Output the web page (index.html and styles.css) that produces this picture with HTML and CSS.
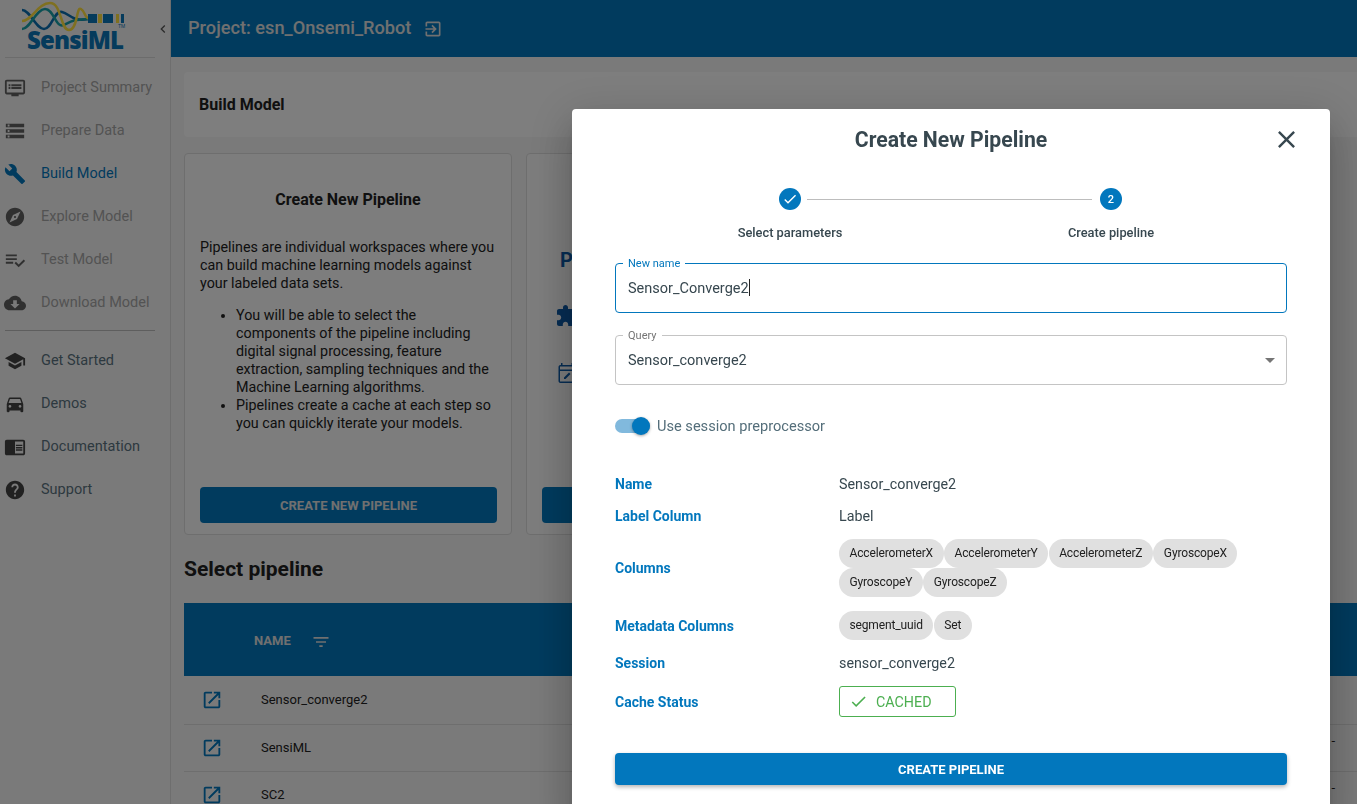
FILE: index.html
```html
<!DOCTYPE html>
<html lang="en">

<head>
    <meta charset="UTF-8">
    <meta name="viewport" content="width=device-width, initial-scale=1.0">
    <title>SensiML - Build Model</title>
    <link rel="stylesheet" href="styles.css">
</head>

<body>
    <div class="app">
        <aside class="sidebar">
            <div class="logo">
                <svg width="150" height="56" viewBox="0 0 150 56">
                    <path class="wave-blue" d="M22 10C30 10 36 29 44 29S54 10 62 12S72 22 88 19" />
                    <path class="wave-teal" d="M22 29C30 29 36 9 45 9S56 29 64 25S72 20 88 19" />
                    <path class="wave-gold" d="M22 21C32 21 38 3 50 3S60 30 69 30S76 6 81 9S84 18 90 19" />
                    <rect class="bar-blue" x="88" y="14" width="9" height="9" />
                    <rect class="bar-gold" x="98" y="14" width="4" height="9" />
                    <rect class="bar-blue" x="103" y="14" width="10" height="9" />
                    <rect class="bar-gold" x="116" y="14" width="3" height="9" />
                    <rect class="bar-blue" x="121" y="14" width="3" height="9" />
                    <text class="logo-name" x="27" y="49" textLength="97">SensiML</text>
                    <text class="logo-tm" x="118" y="28">TM</text>
                </svg>
            </div>
            <svg class="collapse" viewBox="0 0 24 24"><path d="M15.41 7.41L14 6l-6 6 6 6 1.41-1.41L10.83 12z" /></svg>

            <nav class="nav">
                <a class="nav-item muted">
                    <svg viewBox="0 0 24 24"><path d="M21 3H3c-1.1 0-2 .9-2 2v12c0 1.1.9 2 2 2h5v2h8v-2h5c1.1 0 2-.9 2-2V5c0-1.1-.9-2-2-2zm0 14H3V5h18v12zM5 8h2v2H5zm0 3h2v2H5zm3-3h11v2H8zm0 3h11v2H8z" /></svg>
                    Project Summary
                </a>
                <a class="nav-item muted">
                    <svg viewBox="0 0 24 24"><path d="M2 20h20v-4H2v4zm2-3h2v2H4v-2zM2 4v4h20V4H2zm4 3H4V5h2v2zm-4 7h20v-4H2v4zm2-3h2v2H4v-2z" /></svg>
                    Prepare Data
                </a>
                <a class="nav-item active">
                    <svg viewBox="0 0 24 24"><path d="M22.7 19l-9.1-9.1c.9-2.3.4-5-1.5-6.9-2-2-5-2.4-7.4-1.3L9 6 6 9 1.6 4.7C.4 7.1.9 10.1 2.9 12.1c1.9 1.9 4.6 2.4 6.9 1.5l9.1 9.1c.4.4 1 .4 1.4 0l2.3-2.3c.5-.4.5-1.1.1-1.4z" /></svg>
                    Build Model
                </a>
                <a class="nav-item muted">
                    <svg viewBox="0 0 24 24"><path d="M12 10.9c-.61 0-1.1.49-1.1 1.1s.49 1.1 1.1 1.1c.61 0 1.1-.49 1.1-1.1s-.49-1.1-1.1-1.1zM12 2C6.48 2 2 6.48 2 12s4.48 10 10 10 10-4.48 10-10S17.52 2 12 2zm2.19 12.19L6 18l3.81-8.19L18 6l-3.81 8.19z" /></svg>
                    Explore Model
                </a>
                <a class="nav-item muted">
                    <svg viewBox="0 0 24 24"><path d="M14 10H2v2h12v-2zm0-4H2v2h12V6zM2 16h8v-2H2v2zm19.5-4.5L23 13l-6.99 7-4.51-4.5L13 14l3.01 3 5.49-5.5z" /></svg>
                    Test Model
                </a>
                <a class="nav-item muted">
                    <svg viewBox="0 0 24 24"><path d="M19.35 10.04C18.67 6.59 15.64 4 12 4 9.11 4 6.6 5.64 5.35 8.04 2.34 8.36 0 10.91 0 14c0 3.31 2.69 6 6 6h13c2.76 0 5-2.24 5-5 0-2.64-2.05-4.78-4.65-4.96zM17 13l-5 5-5-5h3V9h4v4h3z" /></svg>
                    Download Model
                </a>
                <div class="nav-divider"></div>
                <a class="nav-item">
                    <svg viewBox="0 0 24 24"><path d="M5 13.18v4L12 21l7-3.82v-4L12 17l-7-3.82zM12 3L1 9l11 6 9-4.91V17h2V9L12 3z" /></svg>
                    Get Started
                </a>
                <a class="nav-item">
                    <svg viewBox="0 0 24 24"><path d="M18.92 6.01C18.72 5.42 18.16 5 17.5 5h-11c-.66 0-1.21.42-1.42 1.01L3 12v8c0 .55.45 1 1 1h1c.55 0 1-.45 1-1v-1h12v1c0 .55.45 1 1 1h1c.55 0 1-.45 1-1v-8l-2.08-5.99zM6.5 16c-.83 0-1.5-.67-1.5-1.5S5.67 13 6.5 13s1.5.67 1.5 1.5S7.33 16 6.5 16zm11 0c-.83 0-1.5-.67-1.5-1.5s.67-1.5 1.5-1.5 1.5.67 1.5 1.5-.67 1.5-1.5 1.5zM5 11l1.5-4.5h11L19 11H5z" /></svg>
                    Demos
                </a>
                <a class="nav-item">
                    <svg viewBox="0 0 24 24"><path d="M13 12h7v1.5h-7zm0-2.5h7V11h-7zm0 5h7V16h-7zM21 4H3c-1.1 0-2 .9-2 2v13c0 1.1.9 2 2 2h18c1.1 0 2-.9 2-2V6c0-1.1-.9-2-2-2zm0 15h-9V6h9v13z" /></svg>
                    Documentation
                </a>
                <a class="nav-item">
                    <svg viewBox="0 0 24 24"><path d="M12 2C6.48 2 2 6.48 2 12s4.48 10 10 10 10-4.48 10-10S17.52 2 12 2zm1 17h-2v-2h2v2zm2.07-7.75l-.9.92C13.45 12.9 13 13.5 13 15h-2v-.5c0-1.1.45-2.1 1.17-2.83l1.24-1.26c.37-.36.59-.86.59-1.41 0-1.1-.9-2-2-2s-2 .9-2 2H8c0-2.21 1.79-4 4-4s4 1.79 4 4c0 .88-.36 1.68-.93 2.25z" /></svg>
                    Support
                </a>
            </nav>
        </aside>

        <div class="page">
            <header class="topbar">
                <span class="project-name">Project: esn_Onsemi_Robot</span>
                <svg class="project-exit" viewBox="0 0 24 24"><path d="M10.09 15.59L11.5 17l5-5-5-5-1.41 1.41L12.67 11H3v2h9.67l-2.58 2.59zM19 3H5c-1.11 0-2 .9-2 2v4h2V5h14v14H5v-4H3v4c0 1.1.89 2 2 2h14c1.1 0 2-.9 2-2V5c0-1.1-.9-2-2-2z" /></svg>
            </header>

            <main class="content">
                <div class="title-bar">Build Model</div>

                <div class="cards">
                    <section class="card">
                        <h3>Create New Pipeline</h3>
                        <p>Pipelines are individual workspaces where you can build machine learning models against your labeled data sets.</p>
                        <ul>
                            <li>You will be able to select the components of the pipeline including digital signal processing, feature extraction, sampling techniques and the Machine Learning algorithms.</li>
                            <li>Pipelines create a cache at each step so you can quickly iterate your models.</li>
                        </ul>
                        <button class="card-button">CREATE NEW PIPELINE</button>
                    </section>
                    <section class="card card-second">
                        <div class="second-heading">P</div>
                        <svg class="second-icon" viewBox="0 0 24 24"><path d="M20.5 11H19V7c0-1.1-.9-2-2-2h-4V3.5C13 2.12 11.88 1 10.5 1S8 2.12 8 3.5V5H4c-1.1 0-1.99.9-1.99 2v3.8H3.5c1.49 0 2.7 1.21 2.7 2.7s-1.21 2.7-2.7 2.7H2V20c0 1.1.9 2 2 2h3.8v-1.5c0-1.49 1.21-2.7 2.7-2.7 1.49 0 2.7 1.21 2.7 2.7V22H17c1.1 0 2-.9 2-2v-4h1.5c1.38 0 2.5-1.12 2.5-2.5S21.88 11 20.5 11z" /></svg>
                        <svg class="second-icon second-calendar" viewBox="0 0 24 24"><path d="M5 10h14v1.5h1.5V6c0-1.1-.9-2-2-2H18V2h-1.5v2h-9V2H6v2h-.5C4.4 4 3.5 4.9 3.5 6v14c0 1.1.9 2 2 2h13c1.1 0 2-.9 2-2v-3H19v3.5H5V10zM5 5.5h14V8.5H5zM9 18h1.5l5-5-1.5-1.5-5 5z" /></svg>
                        <button class="card-button second-button" aria-label="Select"></button>
                    </section>
                </div>

                <h2 class="section-title">Select pipeline</h2>

                <table class="pipelines">
                    <thead>
                        <tr>
                            <th class="col-open"></th>
                            <th class="col-name">
                                NAME
                                <svg viewBox="0 0 24 24"><path d="M10 18h4v-2h-4v2zM3 6v2h18V6H3zm3 7h12v-2H6v2z" /></svg>
                            </th>
                        </tr>
                    </thead>
                    <tbody>
                        <tr>
                            <td class="open-cell"><svg viewBox="0 0 24 24"><path d="M19 19H5V5h7V3H5c-1.11 0-2 .9-2 2v14c0 1.1.89 2 2 2h14c1.1 0 2-.9 2-2v-7h-2v7zM14 3v2h3.59l-9.83 9.83 1.41 1.41L19 6.41V10h2V3h-7z" /></svg></td>
                            <td>Sensor_converge2</td>
                        </tr>
                        <tr>
                            <td class="open-cell"><svg viewBox="0 0 24 24"><path d="M19 19H5V5h7V3H5c-1.11 0-2 .9-2 2v14c0 1.1.89 2 2 2h14c1.1 0 2-.9 2-2v-7h-2v7zM14 3v2h3.59l-9.83 9.83 1.41 1.41L19 6.41V10h2V3h-7z" /></svg></td>
                            <td class="row-end">SensiML<span class="cut-off">-</span></td>
                        </tr>
                        <tr>
                            <td class="open-cell"><svg viewBox="0 0 24 24"><path d="M19 19H5V5h7V3H5c-1.11 0-2 .9-2 2v14c0 1.1.89 2 2 2h14c1.1 0 2-.9 2-2v-7h-2v7zM14 3v2h3.59l-9.83 9.83 1.41 1.41L19 6.41V10h2V3h-7z" /></svg></td>
                            <td class="row-end">SC2<span class="cut-off">-</span></td>
                        </tr>
                    </tbody>
                </table>
            </main>
        </div>
    </div>

    <div class="backdrop"></div>

    <div class="dialog">
        <svg class="dialog-close" viewBox="0 0 24 24"><path d="M19 6.41L17.59 5 12 10.59 6.41 5 5 6.41 10.59 12 5 17.59 6.41 19 12 13.41 17.59 19 19 17.59 13.41 12z" /></svg>
        <h2 class="dialog-title">Create New Pipeline</h2>

        <div class="stepper">
            <div class="step">
                <span class="step-dot">
                    <svg viewBox="0 0 24 24"><path d="M9 16.17L4.83 12l-1.42 1.41L9 19 21 7l-1.41-1.41z" /></svg>
                </span>
                <span class="step-label">Select parameters</span>
            </div>
            <div class="step-line"></div>
            <div class="step">
                <span class="step-dot">2</span>
                <span class="step-label">Create pipeline</span>
            </div>
        </div>

        <fieldset class="field field-focus">
            <legend>New name</legend>
            <span class="field-value">Sensor_Converge2<i class="caret"></i></span>
        </fieldset>

        <fieldset class="field field-select">
            <legend>Query</legend>
            <span class="field-value">Sensor_converge2</span>
            <svg class="select-arrow" viewBox="0 0 24 24"><path d="M7 10l5 5 5-5z" /></svg>
        </fieldset>

        <div class="switch-row">
            <span class="switch"><span class="switch-thumb"></span></span>
            <span>Use session preprocessor</span>
        </div>

        <dl class="summary">
            <dt>Name</dt>
            <dd>Sensor_converge2</dd>
            <dt>Label Column</dt>
            <dd>Label</dd>
            <dt>Columns</dt>
            <dd class="chips">
                <span class="chip">AccelerometerX</span>
                <span class="chip">AccelerometerY</span>
                <span class="chip">AccelerometerZ</span>
                <span class="chip">GyroscopeX</span>
                <span class="chip">GyroscopeY</span>
                <span class="chip">GyroscopeZ</span>
            </dd>
            <dt>Metadata Columns</dt>
            <dd class="chips">
                <span class="chip">segment_uuid</span>
                <span class="chip">Set</span>
            </dd>
            <dt>Session</dt>
            <dd>sensor_converge2</dd>
            <dt>Cache Status</dt>
            <dd>
                <span class="cached">
                    <svg viewBox="0 0 24 24"><path d="M9 16.17L4.83 12l-1.42 1.41L9 19 21 7l-1.41-1.41z" /></svg>
                    CACHED
                </span>
            </dd>
        </dl>

        <button class="dialog-button">CREATE PIPELINE</button>
    </div>
</body>

</html>
```

FILE: styles.css
```css
/* General */
* {
    box-sizing: border-box;
}

html,
body {
    height: 100%;
}

body {
    margin: 0;
    overflow: hidden;
    font-family: Roboto, Arial, sans-serif;
    font-size: 14px;
    color: #37474f;
    background-color: #f5f5f5;
}

svg {
    fill: currentColor;
    flex-shrink: 0;
}

.app {
    display: flex;
    height: 100%;
}

/* Sidebar */
.sidebar {
    position: relative;
    width: 171px;
    flex-shrink: 0;
    border-right: 1px solid #dcdcdc;
    background-color: #f5f5f5;
}

.logo {
    height: 58px;
    margin: 0 15px 0 5px;
    border-bottom: 1px solid #d8d8d8;
}

.logo svg {
    display: block;
    margin-left: -5px;
}

.wave-blue,
.wave-teal,
.wave-gold {
    fill: none;
    stroke-width: 2.5;
}

.wave-blue {
    stroke: #0a6fb0;
}

.wave-teal {
    stroke: #17a0a8;
}

.wave-gold {
    stroke: #ffe040;
}

.bar-gold {
    fill: #ffe040;
}

.bar-blue {
    fill: #0a76b8;
}

.logo-name {
    font-family: "Open Sans", sans-serif;
    font-size: 24px;
    font-weight: 800;
    fill: #0a76b8;
}

.logo-tm {
    font-family: "Liberation Sans", sans-serif;
    font-size: 5px;
    fill: #0a76b8;
}

.collapse {
    position: absolute;
    top: 21px;
    left: 155px;
    width: 16px;
    height: 16px;
    color: #555;
}

.nav {
    padding-top: 8px;
}

.nav-item {
    display: flex;
    align-items: center;
    gap: 15px;
    height: 43px;
    padding-left: 4px;
    font-size: 14.5px;
    color: #5b7280;
}

.nav-item svg {
    width: 22px;
    height: 22px;
    color: #424242;
}

.nav-item.muted {
    color: #a6a6a6;
}

.nav-item.muted svg {
    color: #616161;
}

.nav-item.active,
.nav-item.active svg {
    color: #0277bd;
}

.nav-divider {
    height: 1px;
    margin: 6px 15px 8px 5px;
    background-color: #bdbdbd;
}

/* Page */
.page {
    flex: 1;
    min-width: 0;
}

.topbar {
    display: flex;
    align-items: center;
    gap: 12px;
    height: 57px;
    padding: 0 0 3px 17px;
    background-color: #0277bd;
    color: #e0e0e0;
}

.project-name {
    font-size: 18.2px;
    font-weight: 500;
}

.project-exit {
    width: 20px;
    height: 20px;
    margin-top: 3px;
}

.content {
    padding: 15px 0 0 13px;
}

.title-bar {
    display: flex;
    align-items: center;
    height: 65px;
    padding-left: 15px;
    border-radius: 4px 0 0 4px;
    background-color: #fcfcfc;
    color: #212121;
    font-size: 16px;
    font-weight: 700;
}

.cards {
    display: grid;
    grid-template-columns: 328px 342px;
    gap: 14px;
    margin-top: 16px;
}

.card {
    position: relative;
    height: 382px;
    padding: 36px 15px 0;
    border: 1px solid #dddddd;
    border-radius: 4px;
    background-color: #fafafa;
    color: #212121;
    line-height: 18px;
    font-size: 14.3px;
}

.card h3 {
    margin: 0 0 28px;
    font-size: 16px;
    font-weight: 700;
    line-height: 20px;
    text-align: center;
}

.card p {
    margin: 0 0 14px;
}

.card ul {
    margin: 0;
    padding-left: 36px;
}

.card-button {
    position: absolute;
    left: 15px;
    right: 14px;
    bottom: 11px;
    height: 36px;
    border: none;
    border-radius: 4px;
    background-color: #0277bd;
    color: #e0e0e0;
    font-family: inherit;
    font-size: 13px;
    font-weight: 700;
}

.card-second {
    padding: 94px 15px 0 28px;
}

.second-heading {
    padding-left: 5px;
    font-size: 20px;
    font-weight: 700;
    line-height: 24px;
    color: #0d5aa7;
}

.second-icon {
    display: block;
    width: 24px;
    height: 24px;
    margin-top: 32px;
    color: #0d5aa7;
}

.second-calendar {
    margin-top: 33px;
}

.section-title {
    margin: 20px 0 20px;
    font-size: 21px;
    font-weight: 700;
    line-height: 28px;
    color: #212121;
}

/* Table */
.pipelines {
    width: 100%;
    border-collapse: collapse;
    font-size: 13px;
    color: #212121;
}

.pipelines th {
    height: 73px;
    padding: 4px 0 0;
    background-color: #0277bd;
    color: #e0e0e0;
    font-size: 13px;
    font-weight: 700;
    text-align: left;
}

.col-open {
    width: 70px;
}

.col-name svg {
    width: 20px;
    height: 20px;
    margin-left: 17px;
    vertical-align: middle;
}

.pipelines td {
    height: 47px;
    padding: 0 0 0 7px;
    border-bottom: 1px solid #dddddd;
}

.pipelines tbody tr:first-child td {
    height: 48px;
}

.pipelines .open-cell {
    padding: 0 0 0 17px;
    color: #0277bd;
}

.open-cell svg {
    display: block;
    width: 22px;
    height: 22px;
}

.row-end {
    position: relative;
}

.cut-off {
    position: absolute;
    right: 22px;
    top: 8px;
}

/* Dialog */
.backdrop {
    position: fixed;
    inset: 0;
    background-color: rgba(0, 0, 0, 0.5);
}

.dialog {
    position: fixed;
    top: 109px;
    left: 572px;
    width: 758px;
    height: 720px;
    padding: 0 43px;
    border-radius: 4px;
    background-color: #fff;
    box-shadow: 0 11px 15px -7px rgba(0, 0, 0, 0.2), 0 24px 38px 3px rgba(0, 0, 0, 0.14), 0 9px 46px 8px rgba(0, 0, 0, 0.12);
}

.dialog-close {
    position: absolute;
    top: 16px;
    right: 29px;
    width: 29px;
    height: 29px;
    color: #37474f;
}

.dialog-title {
    margin: 0;
    padding-top: 17px;
    font-size: 21.2px;
    font-weight: 700;
    line-height: 28px;
    text-align: center;
    color: #37474f;
}

.stepper {
    display: flex;
    width: 441px;
    margin: 34px 0 0 115px;
}

.step {
    display: flex;
    flex-direction: column;
    align-items: center;
    width: 120px;
    flex-shrink: 0;
}

.step-dot {
    display: flex;
    align-items: center;
    justify-content: center;
    width: 22px;
    height: 22px;
    border-radius: 50%;
    background-color: #0277bd;
    color: #fff;
    font-size: 11px;
    font-weight: 500;
}

.step-dot svg {
    width: 16px;
    height: 16px;
}

.step-label {
    margin-top: 15px;
    font-size: 12.85px;
    font-weight: 500;
    line-height: 16px;
    white-space: nowrap;
}

.step-line {
    flex: 1;
    height: 1px;
    margin: 11px -41px 0 -43px;
    background-color: #bdbdbd;
}

.field {
    position: relative;
    display: flex;
    align-items: center;
    height: 50px;
    margin: 0;
    padding: 0 12px;
    border: 1px solid #c4c4c4;
    border-radius: 4px;
    min-width: 0;
}

.field legend {
    margin-left: -5px;
    padding: 0 5px;
    font-size: 11px;
    line-height: 0;
    color: #757575;
}

.field-focus {
    margin-top: 22px;
    border-color: #0277bd;
}

.field-focus legend {
    color: #0277bd;
}

.field-select {
    margin-top: 22px;
}

.field-value {
    font-size: 14.5px;
    color: #37474f;
}

.caret {
    display: inline-block;
    width: 1px;
    height: 17px;
    vertical-align: -3px;
    background-color: #212121;
}

.select-arrow {
    position: absolute;
    right: 4px;
    width: 24px;
    height: 24px;
    color: #757575;
}

.switch-row {
    position: relative;
    display: flex;
    align-items: center;
    gap: 7px;
    height: 20px;
    margin-top: 31px;
    font-size: 14.6px;
    color: #546e7a;
}

.switch {
    position: relative;
    width: 35px;
    height: 14px;
    border-radius: 7px;
    background-color: #81b9dd;
}

.switch-thumb {
    position: absolute;
    top: -2px;
    right: 0;
    width: 18px;
    height: 18px;
    border-radius: 50%;
    background-color: #0277bd;
    box-shadow: 0 1px 3px rgba(0, 0, 0, 0.35);
}

.summary {
    display: grid;
    grid-template-columns: 224px 1fr;
    align-items: center;
    row-gap: 14px;
    margin: 39px 0 0;
}

.summary dt {
    font-size: 14px;
    font-weight: 700;
    line-height: 18px;
    color: #0277bd;
}

.summary dd {
    margin: 0;
    font-size: 14.3px;
    line-height: 18px;
}

.chips {
    display: flex;
    flex-wrap: wrap;
    gap: 0 0.5px;
}

.chip {
    height: 29px;
    padding: 0 10.5px;
    border-radius: 15px;
    background-color: #e0e0e0;
    color: #212121;
    font-size: 12px;
    letter-spacing: -0.15px;
    line-height: 29px;
}

.cached {
    display: flex;
    align-items: center;
    gap: 8px;
    width: 117px;
    height: 31px;
    padding-left: 9px;
    border: 1px solid #4caf50;
    border-radius: 3px;
    color: #4caf50;
}

.cached svg {
    width: 19px;
    height: 19px;
}

.dialog-button {
    display: block;
    width: 100%;
    height: 32px;
    margin-top: 36px;
    border: none;
    border-radius: 4px;
    background-color: #0277bd;
    color: #fff;
    font-family: inherit;
    font-size: 13px;
    font-weight: 700;
    box-shadow: 0 2px 4px rgba(0, 0, 0, 0.3);
}
```
